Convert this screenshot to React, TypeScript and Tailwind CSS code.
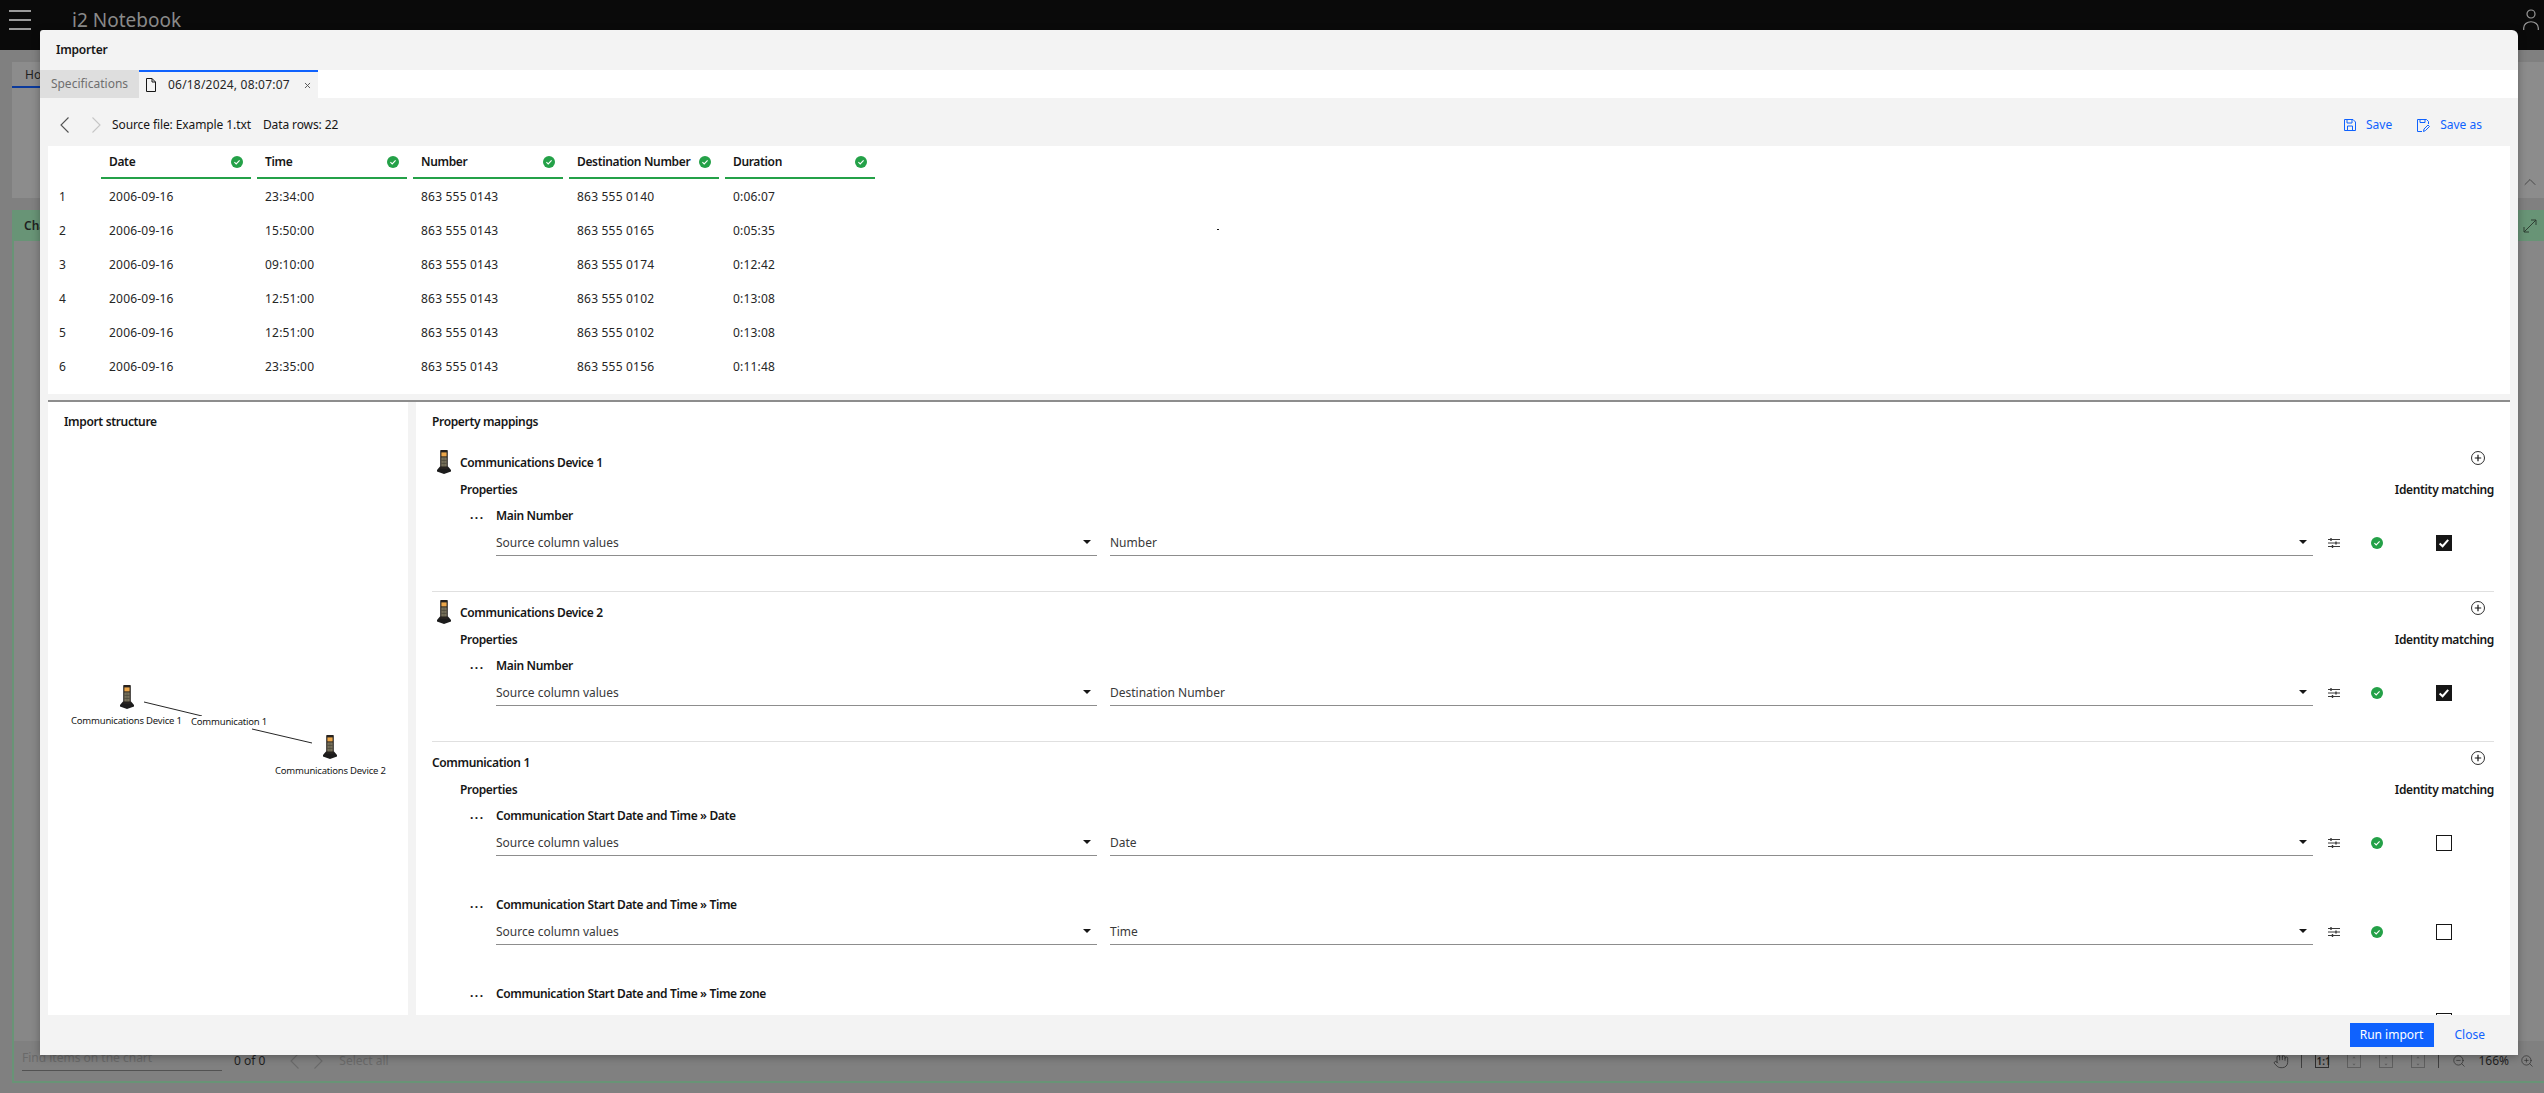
import { ChevronUp, Hand, X, ZoomIn, ZoomOut } from "lucide-react";

const columns = ["Date", "Time", "Number", "Destination Number", "Duration"];

const rows = [
  ["2006-09-16", "23:34:00", "863 555 0143", "863 555 0140", "0:06:07"],
  ["2006-09-16", "15:50:00", "863 555 0143", "863 555 0165", "0:05:35"],
  ["2006-09-16", "09:10:00", "863 555 0143", "863 555 0174", "0:12:42"],
  ["2006-09-16", "12:51:00", "863 555 0143", "863 555 0102", "0:13:08"],
  ["2006-09-16", "12:51:00", "863 555 0143", "863 555 0102", "0:13:08"],
  ["2006-09-16", "23:35:00", "863 555 0143", "863 555 0156", "0:11:48"],
];

const Phone = ({ className }: { className: string }) => (
  <svg viewBox="0 0 14 24" className={className}>
    <path d="M0 20 L3 16.5 L11 16.5 L14 20 L14 21.5 L7 24 L0 21.5 Z" fill="#1c1c1c" />
    <rect x="3.2" y="0" width="7.6" height="19" rx="0.8" fill="#26221f" />
    <rect x="4.4" y="2.4" width="5.2" height="4" fill="#eda74a" />
    <rect x="4.4" y="7.4" width="5.2" height="9" fill="#8a8268" />
    <path d="M6.1 7.4 V16.4 M7.9 7.4 V16.4 M4.4 10.4 H9.6 M4.4 13.4 H9.6" stroke="#3d3a30" strokeWidth="0.6" />
  </svg>
);

const GreenCheck = () => (
  <svg viewBox="0 0 12 12" className="w-3 h-3 shrink-0">
    <circle cx="6" cy="6" r="6" fill="#24a148" />
    <path d="M3.4 6.2 L5.2 7.9 L8.6 4.4" fill="none" stroke="white" strokeWidth="1.1" />
  </svg>
);

const Checkbox = ({ checked }: { checked: boolean }) =>
  checked ? (
    <div className="w-4 h-4 shrink-0 bg-[#161616] flex items-center justify-center">
      <svg viewBox="0 0 16 16" className="w-4 h-4">
        <path d="M3.6 8.4 L6.6 11.2 L12.2 4.8" fill="none" stroke="white" strokeWidth="2" />
      </svg>
    </div>
  ) : (
    <div className="w-4 h-4 shrink-0 border border-[#161616] bg-white" />
  );

const Caret = () => (
  <svg viewBox="0 0 8 4" className="w-2 h-1 shrink-0">
    <path d="M0 0 H8 L4 4 Z" fill="#161616" />
  </svg>
);

const Sliders = () => (
  <svg viewBox="0 0 12 10" className="w-3 h-[10px] shrink-0" fill="none" stroke="#393939" strokeWidth="1">
    <path d="M0 1.5 H12 M0 5 H12 M0 8.5 H12" />
    <path d="M3 0 V3 M8 3.5 V6.5 M4.5 7 V10" strokeWidth="1.4" />
  </svg>
);

const PlusCircle = () => (
  <svg viewBox="0 0 14 14" className="w-[14px] h-[14px] shrink-0" fill="none" stroke="#161616">
    <circle cx="7" cy="7" r="6.5" strokeWidth="0.9" />
    <path d="M7 3.8 V10.2 M3.8 7 H10.2" strokeWidth="1.2" />
  </svg>
);

const Chevron = ({ left, color }: { left?: boolean; color: string }) => (
  <svg viewBox="0 0 9 16" className="w-[9px] h-4 shrink-0" fill="none" stroke={color} strokeWidth="1.1">
    <path d={left ? "M8.5 0.5 L1 8 L8.5 15.5" : "M0.5 0.5 L8 8 L0.5 15.5"} />
  </svg>
);

const Select = ({ value, className }: { value: string; className: string }) => (
  <div className={`h-[27px] border-b border-[#8d8d8d] flex items-center justify-between pr-[6px] text-[12px] text-[#393939] ${className}`}>
    <span className="pt-[2px]">{value}</span>
    <Caret />
  </div>
);

type MappingProps = { title: string; source?: string; column: string; checked: boolean };

const Mapping = ({ title, source = "Source column values", column, checked }: MappingProps) => (
  <div className="mt-[10px] mb-[40px]">
    <div className="flex items-center h-4">
      <span className="w-[64px] pl-[38px] font-bold leading-[8px] text-[12px] tracking-[1.5px]">...</span>
      <span className="font-semibold text-[12px] tracking-[-0.35px] pt-[2px]">{title}</span>
    </div>
    <div className="flex items-center mt-[6px] pl-[64px] pr-[42px]">
      <Select value={source} className="w-[601px]" />
      <Select value={column} className="w-[1203px] ml-[13px]" />
      <div className="ml-[15px]">
        <Sliders />
      </div>
      <div className="ml-[31px]">
        <GreenCheck />
      </div>
      <div className="ml-[53px]">
        <Checkbox checked={checked} />
      </div>
    </div>
  </div>
);

const SectionHead = ({ name, icon }: { name: string; icon?: boolean }) => (
  <>
    <div className="flex justify-between h-6 pr-[9px]">
      <div className="flex items-center">
        {icon && (
          <div className="w-[28px] pl-[5px]">
            <Phone className="w-[14px] h-6" />
          </div>
        )}
        <span className="font-semibold text-[12px] tracking-[-0.35px] pt-[2px]">{name}</span>
      </div>
      <div className="mt-px">
        <PlusCircle />
      </div>
    </div>
    <div className="flex justify-between mt-[7px] pl-[28px] h-4 items-center text-[12px] font-semibold tracking-[-0.35px] pt-[2px]">
      <span>Properties</span>
      <span>Identity matching</span>
    </div>
  </>
);

const Table = () => (
  <div className="h-[248px] bg-white mx-2 shrink-0 relative">
    <div className="flex h-[33px]">
      <div className="w-[53px]" />
      {columns.map((c) => (
        <div key={c} className="w-[150px] mr-[6px] border-b-2 border-[#24a148] px-2 flex items-center justify-between font-semibold text-[12px] tracking-[-0.35px]">
          <span className="pt-px">{c}</span>
          <GreenCheck />
        </div>
      ))}
    </div>
    {rows.map((r, i) => (
      <div key={i} className="flex h-[34px] items-center text-[12px] text-[#262626] pt-[2px] tracking-[0.2px]">
        <div className="w-[53px] pl-[11px]">{i + 1}</div>
        {r.map((v, j) => (
          <div key={j} className="w-[150px] mr-[6px] pl-2">
            {v}
          </div>
        ))}
      </div>
    ))}
    <div className="absolute left-[1169px] top-[83px] w-[2px] h-[1px] bg-[#161616]" />
  </div>
);

const Graph = () => (
  <div className="w-[360px] bg-white relative shrink-0">
    <div className="pl-4 pt-[12px] font-semibold text-[12px] tracking-[-0.35px] leading-4">Import structure</div>
    <svg className="absolute left-0 top-0 w-[360px] h-[400px]" fill="none" stroke="#262626">
      <path d="M96 300 L154 314 M204 327 L264 341" />
    </svg>
    <Phone className="absolute left-[72px] top-[283px] w-[14px] h-6" />
    <Phone className="absolute left-[275px] top-[333px] w-[14px] h-6" />
    <span className="absolute left-[23px] top-[313px] text-[9.5px] tracking-[-0.2px] leading-3 whitespace-nowrap">Communications Device 1</span>
    <span className="absolute left-[143px] top-[314px] text-[9.5px] tracking-[-0.2px] leading-3 whitespace-nowrap bg-white">Communication 1</span>
    <span className="absolute left-[227px] top-[363px] text-[9.5px] tracking-[-0.2px] leading-3 whitespace-nowrap">Communications Device 2</span>
  </div>
);

const Mappings = () => (
  <div className="flex-1 bg-white overflow-hidden px-4 pt-[12px]">
    <div className="font-semibold text-[12px] tracking-[-0.35px] leading-4 mb-[20px]">Property mappings</div>
    <SectionHead name="Communications Device 1" icon />
    <Mapping title="Main Number" column="Number" checked />
    <div className="border-t border-[#e0e0e0] -mt-[5px] pt-2">
      <SectionHead name="Communications Device 2" icon />
      <Mapping title="Main Number" column="Destination Number" checked />
    </div>
    <div className="border-t border-[#e0e0e0] -mt-[5px] pt-2">
      <SectionHead name="Communication 1" />
      <Mapping title="Communication Start Date and Time » Date" column="Date" checked={false} />
      <Mapping title="Communication Start Date and Time » Time" column="Time" checked={false} />
      {/* scrolled past the panel edge, only the title and the top of the checkbox show */}
      <Mapping title="Communication Start Date and Time » Time zone" source="" column="" checked={false} />
    </div>
  </div>
);

const Importer = () => (
  <div className="absolute left-[40px] top-[30px] w-[2478px] h-[1025px] bg-[#f3f3f3] rounded-tr-[6px] rounded-tl-[3px] shadow-[0_2px_8px_rgba(0,0,0,0.3)] flex flex-col text-[#161616]">
    <div className="h-[40px] flex items-center pl-4 text-[12px] font-semibold tracking-[-0.2px] shrink-0">Importer</div>
    <div className="h-[28px] bg-white flex shrink-0 text-[12px]">
      <div className="w-[99px] bg-[#dedede] text-[#6f6f6f] flex items-center justify-center">Specifications</div>
      <div className="w-[179px] bg-[#f3f3f3] border-t-2 border-[#0f62fe] flex items-center pl-[7px] text-[#262626]">
        <svg viewBox="0 0 10 14" className="w-[10px] h-[14px]" fill="none" stroke="#161616">
          <path d="M0.5 0.5 H6 L9.5 4 V13.5 H0.5 Z M6 0.5 V4 H9.5" />
        </svg>
        <span className="ml-[12px] tracking-[0.2px]">06/18/2024, 08:07:07</span>
        <X className="w-[9px] h-[9px] ml-[13px] text-[#525252]" strokeWidth={2.5} />
      </div>
    </div>
    <div className="h-[48px] flex items-center shrink-0 text-[12px] pr-[36px] pt-[6px]">
      <div className="ml-5">
        <Chevron left color="#525252" />
      </div>
      <div className="ml-[23px]">
        <Chevron color="#c6c6c6" />
      </div>
      <span className="ml-[11px] tracking-[-0.1px]">Source file: Example 1.txt</span>
      <span className="ml-3 tracking-[-0.1px]">Data rows: 22</span>
      <div className="ml-auto flex items-center text-[#0f62fe]">
        <svg viewBox="0 0 12 12" className="w-3 h-3" fill="none" stroke="#0f62fe">
          <path d="M0.5 0.5 H9 L11.5 3 V11.5 H0.5 Z M3 0.5 V4 H8 V0.5 M3.5 11.5 V7 H8.5 V11.5" />
        </svg>
        <span className="ml-[10px]">Save</span>
        <svg viewBox="0 0 13 13" className="w-[13px] h-[13px] ml-[25px]" fill="none" stroke="#0f62fe">
          <path d="M5 12.5 H0.5 V0.5 H9.5 L11.5 2.5 V5 M3 0.5 V3.5 H8 V0.5 M6.5 12.5 L7 10 L11 6 L12.5 7.5 L8.5 11.5 Z" />
        </svg>
        <span className="ml-[10px]">Save as</span>
      </div>
    </div>
    <Table />
    <div className="mx-2 mt-[6px] h-[2px] bg-[#8d8d8d] shrink-0" />
    <div className="flex flex-1 min-h-0 mx-2 gap-2">
      <Graph />
      <Mappings />
    </div>
    <div className="h-[40px] flex items-center justify-end pr-[33px] shrink-0 text-[12px]">
      <button className="w-[84px] h-6 bg-[#0f62fe] text-white">Run import</button>
      <span className="ml-[21px] text-[#0f62fe]">Close</span>
    </div>
  </div>
);

const FitIcon = ({ className }: { className: string }) => (
  <svg viewBox="0 0 14 14" className={className} fill="none" stroke="#5f5f5f">
    <rect x="0.5" y="0.5" width="13" height="13" />
    <path d="M7 2.5 L5.5 4.2 H8.5 Z M7 11.5 L5.5 9.8 H8.5 Z" fill="#5f5f5f" stroke="none" />
  </svg>
);

const Backdrop = () => (
  <div className="h-full flex flex-col bg-[#808080] text-[#1f1f1f]">
    <div className="h-[50px] bg-[#0a0a0a] shrink-0 flex items-center pb-[10px] relative">
      <div className="ml-[9px] w-[22px] flex flex-col gap-[7px]">
        <div className="h-[2px] bg-[#9a9a9a]" />
        <div className="h-[2px] bg-[#9a9a9a]" />
        <div className="h-[2px] bg-[#9a9a9a]" />
      </div>
      <span className="ml-[41px] text-[19px] text-[#8a8a8a]">i2 Notebook</span>
      <svg viewBox="0 0 16 22" className="absolute right-[5px] top-[9px] w-4 h-[22px]" fill="none" stroke="#9a9a9a" strokeWidth="1.2">
        <circle cx="8" cy="5" r="4" />
        <path d="M0.7 21 V19 A7 6 0 0 1 15.3 19 V21" />
      </svg>
    </div>
    <div className="ml-3 mt-3 h-[136px] bg-[#8c8c8c] shrink-0 relative">
      <div className="w-[29px] h-[26px] border-b-2 border-[#0b3a9c] pl-[13px] text-[12px] leading-[26px]">Ho</div>
      <ChevronUp className="absolute right-[4px] top-[110px] w-5 h-5 text-[#4a4a4a]" strokeWidth={1.2} />
    </div>
    <div className="ml-3 mt-3 mb-[10px] flex-1 flex flex-col border-l-2 border-b-2 border-[#689476]">
      <div className="h-[31px] bg-[#689476] shrink-0 flex items-center justify-between pl-3 pr-[7px] text-[12px] font-semibold -ml-[2px]">
        <span>Cha</span>
        <svg viewBox="0 0 14 14" className="w-[14px] h-[14px]" fill="none" stroke="#2f3f33">
          <path d="M1 13 L13 1 M8 1 H13 V6 M1 8 V13 H6" />
        </svg>
      </div>
      <div className="flex-1 bg-[#878787]" />
      <div className="h-[40px] flex items-center pl-2 pr-[10px] text-[12px] shrink-0">
        <div className="w-[200px] h-[30px] border-b border-[#525252] text-[#6a6a6a] pt-[9px] -mt-[10px] leading-4">Find items on the chart</div>
        <span className="ml-3">0 of 0</span>
        <div className="ml-[25px]">
          <Chevron left color="#6a6a6a" />
        </div>
        <div className="ml-[15px]">
          <Chevron color="#6a6a6a" />
        </div>
        <span className="ml-4 text-[#6a6a6a]">Select all</span>
        <div className="ml-auto flex items-center">
          <Hand className="w-4 h-4 text-[#2f2f2f]" strokeWidth={1.2} />
          <div className="w-px h-[14px] bg-[#3f3f3f] ml-[12px]" />
          <span className="ml-[13px] border border-[#2f2f2f] text-[10px] font-semibold leading-3 w-[14px] text-center">1:1</span>
          <FitIcon className="w-[14px] h-[14px] ml-[18px]" />
          <FitIcon className="w-[14px] h-[14px] ml-[18px]" />
          <FitIcon className="w-[14px] h-[14px] ml-[18px]" />
          <div className="w-px h-[14px] bg-[#3f3f3f] ml-[13px]" />
          <ZoomOut className="w-[14px] h-[14px] ml-[13px] text-[#2f2f2f]" strokeWidth={1.2} />
          <span className="ml-[12px]">166%</span>
          <ZoomIn className="w-[14px] h-[14px] ml-[11px] text-[#2f2f2f]" strokeWidth={1.2} />
        </div>
      </div>
    </div>
  </div>
);

const App = () => (
  <div className="relative w-[2544px] h-[1093px] overflow-hidden font-['Noto_Sans',sans-serif]">
    <Backdrop />
    <Importer />
  </div>
);

export default App;
